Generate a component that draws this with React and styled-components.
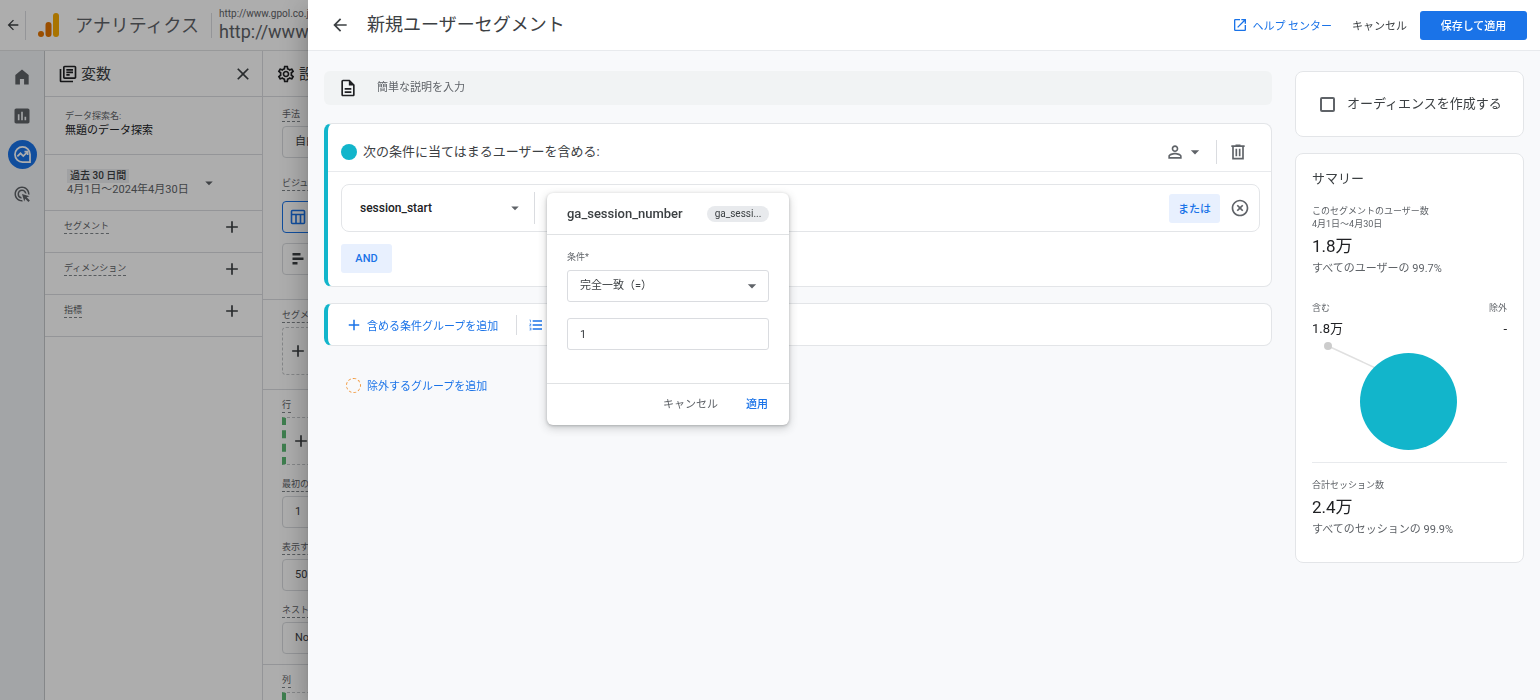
import styled, { createGlobalStyle, css } from "styled-components";
import {
  MdAdd,
  MdAdsClick,
  MdArrowBack,
  MdArrowDropDown,
  MdAssessment,
  MdClose,
  MdFormatListNumbered,
  MdHighlightOff,
  MdOpenInNew,
  MdOutlineDescription,
  MdOutlineLibraryBooks,
  MdOutlineSettings,
  MdPersonOutline,
} from "react-icons/md";

const variableRows = ["セグメント", "ディメンション", "指標"];

const AnalyticsLogo = () => (
  <svg width="22" height="24" viewBox="0 0 22 24" aria-hidden="true">
    <rect x="15" y="0" width="6" height="24" rx="3" fill="#f9ab00" />
    <rect x="7.500" y="9" width="6" height="15" rx="3" fill="#e37400" />
    <circle cx="3" cy="21" r="3" fill="#e37400" />
  </svg>
);

const HomeIcon = () => (
  <svg width="20" height="20" viewBox="0 0 24 24" fill="currentColor">
    <path d="M4 21V9.500L12 3l8 6.500V21h-5.500v-6.500h-5V21z" />
  </svg>
);

const ExploreIcon = () => (
  <svg
    width="19"
    height="19"
    viewBox="0 0 24 24"
    fill="none"
    stroke="currentColor"
    strokeWidth="2.200"
  >
    <path d="M12 2.500a9.500 9.500 0 1 0 0 19h9.500V12A9.500 9.500 0 0 0 12 2.500z" />
    <path d="M5.500 14.500l4-4 3.500 3.500 5-5" />
    <path d="M14.500 8.500h4v4" />
  </svg>
);

const TableIcon = () => (
  <svg
    width="16"
    height="16"
    viewBox="0 0 16 16"
    fill="none"
    stroke="currentColor"
    strokeWidth="1.600"
  >
    <rect x="1.500" y="1.500" width="13" height="13" rx="1" />
    <path d="M1.500 5.500h13M6 5.500v9M10.500 5.500v9" />
  </svg>
);

const BarsIcon = () => (
  <svg width="16" height="16" viewBox="0 0 16 16" fill="currentColor">
    <rect x="2.500" y="2" width="8" height="2.500" />
    <rect x="2.500" y="6.500" width="11" height="2.500" />
    <rect x="2.500" y="11" width="5" height="2.500" />
  </svg>
);

const TrashIcon = () => (
  <svg width="20" height="20" viewBox="0 0 24 24" fill="currentColor">
    <path
      fillRule="evenodd"
      d="M5 21V6H4V4h5V3h6v1h5v2h-1v15zM7 6v13h10V6zM9 8h2v9H9zM13 8h2v9h-2z"
    />
  </svg>
);

const SplitChart = () => (
  <svg width="195" height="123" viewBox="0 2 195 123" aria-hidden="true">
    <path d="M16 9L70 34" stroke="#e0e0e0" strokeWidth="1.500" />
    <circle cx="16" cy="9" r="4" fill="#ccc" />
    <circle cx="96.500" cy="64.500" r="48.500" fill="#12b5cb" />
  </svg>
);

const App = () => {
  return (
    <>
      <GlobalStyle />
      <Shell>
        <TopBar>
          <BackCell>
            <IconButton aria-label="戻る">
              <MdArrowBack size={16} />
            </IconButton>
          </BackCell>
          <AnalyticsLogo />
          <ProductName>アナリティクス</ProductName>
          <Account>
            <small>http://www.gpol.co.jp</small>
            <span>http://www.gpol.co.jp</span>
          </Account>
        </TopBar>
        <Workspace>
          <Rail>
            <RailButton aria-label="ホーム">
              <HomeIcon />
            </RailButton>
            <RailButton aria-label="レポート">
              <MdAssessment size={20} />
            </RailButton>
            <RailButton aria-label="探索" $active>
              <ExploreIcon />
            </RailButton>
            <RailButton aria-label="広告">
              <MdAdsClick size={18} />
            </RailButton>
          </Rail>

          <VariablePanel>
            <PanelTitle>
              <MdOutlineLibraryBooks size={20} />
              <h2>変数</h2>
              <IconButton aria-label="閉じる">
                <MdClose size={20} />
              </IconButton>
            </PanelTitle>
            <NameBlock>
              <small>データ探索名:</small>
              <p>無題のデータ探索</p>
            </NameBlock>
            <DateBlock>
              <div>
                <DateChip>過去 30 日間</DateChip>
                <p>4月1日～2024年4月30日</p>
              </div>
              <MdArrowDropDown size={18} />
            </DateBlock>
            {variableRows.map((name) => (
              <VariableRow key={name}>
                <DottedLabel>{name}</DottedLabel>
                <IconButton aria-label={`${name}を追加`}>
                  <MdAdd size={20} />
                </IconButton>
              </VariableRow>
            ))}
          </VariablePanel>

          <SettingsPanel>
            <PanelTitle>
              <MdOutlineSettings size={20} />
              <h2>設定</h2>
            </PanelTitle>
            <SettingsSection $top={8}>
              <Field>
                <DottedLabel>手法</DottedLabel>
                <FieldBox>自由形式</FieldBox>
              </Field>
              <Field $tiles>
                <DottedLabel>ビジュアリゼーション</DottedLabel>
                <Tile aria-label="テーブル" $active>
                  <TableIcon />
                </Tile>
                <Tile aria-label="棒グラフ">
                  <BarsIcon />
                </Tile>
              </Field>
            </SettingsSection>
            <SettingsSection $bottom={14}>
              <Field>
                <DottedLabel>セグメントの比較</DottedLabel>
                <DropZone>
                  <MdAdd size={20} />
                </DropZone>
              </Field>
            </SettingsSection>
            <SettingsSection>
              <Field>
                <DottedLabel>行</DottedLabel>
                <DropZone $marked>
                  <MdAdd size={20} />
                </DropZone>
              </Field>
              <Field>
                <DottedLabel>最初の行</DottedLabel>
                <FieldBox>1</FieldBox>
              </Field>
              <Field>
                <DottedLabel>表示する行数</DottedLabel>
                <FieldBox>50</FieldBox>
              </Field>
              <Field>
                <DottedLabel>ネストされた行</DottedLabel>
                <FieldBox>No</FieldBox>
              </Field>
            </SettingsSection>
            <SettingsSection>
              <Field>
                <DottedLabel>列</DottedLabel>
                <DropZone $marked>
                  <MdAdd size={20} />
                </DropZone>
              </Field>
            </SettingsSection>
          </SettingsPanel>
        </Workspace>
      </Shell>
      <Scrim />

      <Drawer>
        <DrawerHeader>
          <IconButton aria-label="戻る">
            <MdArrowBack size={20} />
          </IconButton>
          <h1>新規ユーザーセグメント</h1>
          <HelpLink href="#help">
            <MdOpenInNew size={16} />
            ヘルプ センター
          </HelpLink>
          <CancelButton>キャンセル</CancelButton>
          <SaveButton>保存して適用</SaveButton>
        </DrawerHeader>
        <DrawerBody>
          <Main>
            <Description>
              <MdOutlineDescription size={20} />
              <input aria-label="説明" placeholder="簡単な説明を入力" />
            </Description>

            <GroupCard>
              <GroupHeader>
                <Dot />
                <h2>次の条件に当てはまるユーザーを含める:</h2>
                <ScopeButton aria-label="スコープ">
                  <MdPersonOutline size={20} />
                  <MdArrowDropDown size={20} />
                </ScopeButton>
                <Divider $height={24} />
                <IconButton aria-label="削除" $muted>
                  <TrashIcon />
                </IconButton>
              </GroupHeader>
              <GroupBody>
                <ConditionRow>
                  <EventButton>
                    session_start
                    <MdArrowDropDown size={18} />
                  </EventButton>
                  <Divider $height={32} />
                  <RowActions>
                    <TonalButton>または</TonalButton>
                    <IconButton aria-label="条件を削除" $muted>
                      <MdHighlightOff size={20} />
                    </IconButton>
                  </RowActions>

                  <Popover>
                    <PopoverHeader>
                      <h3>ga_session_number</h3>
                      <span>ga_sessi...</span>
                    </PopoverHeader>
                    <PopoverBody>
                      <label htmlFor="operator">条件*</label>
                      <SelectBox>
                        <select id="operator" defaultValue="eq">
                          <option value="eq">完全一致（=）</option>
                        </select>
                        <MdArrowDropDown size={20} />
                      </SelectBox>
                      <ValueInput aria-label="値" defaultValue="1" />
                    </PopoverBody>
                    <PopoverFooter>
                      <TextButton>キャンセル</TextButton>
                      <TextButton $primary>適用</TextButton>
                    </PopoverFooter>
                  </Popover>
                </ConditionRow>
                <TonalButton $latin>AND</TonalButton>
              </GroupBody>
            </GroupCard>

            <AddCard>
              <AddButton>
                <MdAdd size={18} />
                含める条件グループを追加
              </AddButton>
              <Divider $height={20} />
              <AddButton aria-label="含める順序グループを追加">
                <MdFormatListNumbered size={16} />
              </AddButton>
            </AddCard>

            <ExcludeButton>
              <DashedRing />
              除外するグループを追加
            </ExcludeButton>
          </Main>

          <Side>
            <AudienceCard>
              <input type="checkbox" />
              オーディエンスを作成する
            </AudienceCard>
            <SummaryCard>
              <h2>サマリー</h2>
              <Caption>このセグメントのユーザー数</Caption>
              <Caption>4月1日～4月30日</Caption>
              <Figure>1.8万</Figure>
              <Note>すべてのユーザーの 99.7%</Note>
              <Split>
                <div>
                  <Caption>含む</Caption>
                  <SmallFigure>1.8万</SmallFigure>
                </div>
                <div>
                  <Caption>除外</Caption>
                  <SmallFigure>-</SmallFigure>
                </div>
              </Split>
              <SplitChart />
              <Totals>
                <Caption>合計セッション数</Caption>
                <Figure>2.4万</Figure>
                <Note>すべてのセッションの 99.9%</Note>
              </Totals>
            </SummaryCard>
          </Side>
        </DrawerBody>
      </Drawer>
    </>
  );
};

const GlobalStyle = createGlobalStyle`
  * {
    box-sizing: border-box;
  }

  body {
    margin: 0;
    overflow: hidden;
    color: #3c4043;
    background: #fff;
    font-family: Roboto, "Noto Sans CJK JP", sans-serif;
    font-size: 11px;
    line-height: 16px;
  }

  h1, h2, h3, p {
    margin: 0;
    font-weight: 400;
  }

  button, input, select {
    margin: 0;
    padding: 0;
    border: 0;
    background: none;
    color: inherit;
    font: inherit;
  }

  button {
    cursor: pointer;
  }

  svg {
    display: block;
    flex: none;
  }
`;

/* labels that are Japanese only sit better on the CJK font's own baseline */
const japaneseLabel = css`
  font-family: "Noto Sans CJK JP", sans-serif;
`;

const Shell = styled.div`
  display: flex;
  flex-direction: column;
  height: 100vh;
  overflow: hidden;
`;

const TopBar = styled.header`
  display: flex;
  flex: none;
  align-items: center;
  height: 51px;
  border-bottom: 1px solid #e0e2e4;
`;

const IconButton = styled.button`
  display: grid;
  place-items: center;
  color: ${({ $muted }) => ($muted ? "#5f6368" : "#3c4043")};
`;

const BackCell = styled.div`
  display: flex;
  align-items: center;
  height: 29px;
  padding: 0 4px 0 5px;
  margin-right: 12px;
  border-right: 1px solid #dadce0;
`;

const ProductName = styled.div`
  padding: 0 12px 0 15px;
  border-right: 1px solid #dadce0;
  color: #5f6368;
  font-size: 18px;
  line-height: 25px;
  white-space: nowrap;
`;

const Account = styled.div`
  display: flex;
  flex-direction: column;
  padding-left: 7px;
  color: #5f6368;

  small {
    font-size: 10px;
    line-height: 14px;
  }

  span {
    font-size: 18px;
    line-height: 22px;
  }
`;

const Workspace = styled.div`
  display: flex;
  flex: 1;
  min-height: 0;
`;

const Rail = styled.nav`
  display: flex;
  flex: none;
  flex-direction: column;
  align-items: center;
  gap: 10px;
  width: 45px;
  padding-top: 11px;
  border-right: 1px solid #c4c7ca;
  background: #f1f3f6;
`;

const RailButton = styled.button`
  display: grid;
  place-items: center;
  width: 29px;
  height: 29px;
  border-radius: 50%;
  color: ${({ $active }) => ($active ? "#fff" : "#5f6368")};
  background: ${({ $active }) => ($active ? "#1a73e8" : "transparent")};
`;

const VariablePanel = styled.section`
  flex: none;
  width: 218px;
  border-right: 1px solid #dadce0;
`;

const SettingsPanel = styled.section`
  flex: none;
  width: 218px;
  border-right: 1px solid #dadce0;
`;

const PanelTitle = styled.div`
  display: flex;
  align-items: center;
  gap: 3px;
  height: 46px;
  padding: 0 9px 0 13px;
  border-bottom: 1px solid #dadce0;
  color: #202124;

  h2 {
    flex: 1;
    color: #3c4043;
    font-size: 15px;
    line-height: 20px;
  }
`;

const NameBlock = styled.div`
  height: 58px;
  padding: 12px 20px;
  border-bottom: 1px solid #dadce0;

  small {
    display: block;
    color: #5f6368;
    font-size: 9px;
    line-height: 14px;
  }

  p {
    color: #202124;
  }
`;

const DateBlock = styled.div`
  display: flex;
  align-items: center;
  gap: 11px;
  height: 56px;
  padding: 0 22px;
  border-bottom: 1px solid #dadce0;
  color: #5f6368;

  p {
    line-height: 14px;
    white-space: nowrap;
  }
`;

const DateChip = styled.div`
  width: fit-content;
  padding: 0 3px;
  background: #eceef0;
  color: #3c4043;
  font-size: 10px;
  font-weight: 500;
  line-height: 14px;
`;

const VariableRow = styled.div`
  display: flex;
  align-items: flex-start;
  justify-content: space-between;
  height: 42px;
  padding: 6px 20px 0 19px;
  border-bottom: 1px solid #dadce0;

  svg {
    color: #3c4043;
  }
`;

const DottedLabel = styled.span`
  width: fit-content;
  margin-top: 2px;
  border-bottom: 1px dashed #80868b;
  color: #5f6368;
  font-size: 9px;
  line-height: 14px;
  white-space: nowrap;
`;

const SettingsSection = styled.div`
  display: flex;
  flex-direction: column;
  gap: 10px;
  padding: ${({ $top = 6 }) => $top}px 19px ${({ $bottom = 10 }) => $bottom}px;
  border-bottom: 1px solid #dadce0;
`;

const Field = styled.div`
  display: flex;
  flex-direction: column;
  gap: ${({ $tiles }) => ($tiles ? "10px" : "4px")};
  padding: ${({ $tiles }) => ($tiles ? "6px 0 14px" : "0")};
`;

const FieldBox = styled.div`
  height: 32px;
  padding: 0 12px;
  border: 1px solid #dadce0;
  border-radius: 4px;
  line-height: 30px;
`;

const Tile = styled.button`
  display: grid;
  place-items: center;
  width: 32px;
  height: 32px;
  border: 1px solid ${({ $active }) => ($active ? "#1a73e8" : "#dadce0")};
  border-radius: 4px;
  color: ${({ $active }) => ($active ? "#1a73e8" : "#3c4043")};
`;

const DropZone = styled.div`
  display: flex;
  align-items: center;
  height: 48px;
  padding-left: 5px;
  border: 1px dashed #c4c7ca;
  border-radius: 4px;

  ${({ $marked }) =>
    $marked &&
    css`
      border-left: 4px dashed #5bb974;
      border-radius: 0;
    `}
`;

const Scrim = styled.div`
  position: fixed;
  inset: 0;
  background: rgba(0, 0, 0, 0.32);
`;

const Drawer = styled.aside`
  position: fixed;
  inset: 0 0 0 308px;
  display: flex;
  flex-direction: column;
  background: #f8f9fb;
  box-shadow: 0 8px 10px -5px rgba(0, 0, 0, 0.2),
    0 16px 24px 2px rgba(0, 0, 0, 0.14), 0 6px 30px 5px rgba(0, 0, 0, 0.12);
`;

const DrawerHeader = styled.header`
  display: flex;
  flex: none;
  align-items: center;
  height: 51px;
  padding: 0 13px 0 22px;
  border-bottom: 1px solid #e8eaed;
  background: #fff;

  h1 {
    flex: 1;
    padding-left: 17px;
    font-size: 18px;
    line-height: 24px;
  }
`;

const HelpLink = styled.a`
  ${japaneseLabel}
  display: flex;
  align-items: center;
  gap: 5px;
  margin-right: 20px;
  color: #1a73e8;
  text-decoration: none;
`;

const TextButton = styled.button`
  color: ${({ $primary }) => ($primary ? "#1a73e8" : "#5f6368")};
  font-weight: ${({ $primary }) => ($primary ? 500 : 400)};
`;

const CancelButton = styled.button`
  ${japaneseLabel}
`;

const SaveButton = styled.button`
  ${japaneseLabel}
  width: 107px;
  height: 29px;
  margin-left: 13px;
  border-radius: 3px;
  background: #1a73e8;
  color: #fff;
  font-weight: 500;
`;

const DrawerBody = styled.div`
  display: flex;
  flex: 1;
  align-items: flex-start;
  gap: 23px;
  min-height: 0;
  padding: 20px 16px;
`;

const Main = styled.main`
  display: flex;
  flex: 1;
  flex-direction: column;
  min-width: 0;
`;

const Description = styled.div`
  display: flex;
  align-items: center;
  gap: 19px;
  height: 34px;
  padding: 0 14px;
  margin-bottom: 18px;
  border-radius: 6px;
  background: #f1f3f4;
  color: #202124;

  input {
    flex: 1;
    outline: 0;
  }

  input::placeholder {
    color: #5f6368;
    opacity: 1;
  }
`;

const cardFrame = css`
  border: 1px solid #e3e5e8;
  border-radius: 8px;
  background: #fff;
`;

const GroupCard = styled.section`
  ${cardFrame}
  border-left: 4px solid #12b5cb;
  margin-bottom: 16px;
`;

const GroupHeader = styled.div`
  display: flex;
  align-items: center;
  height: 48px;
  padding: 8px 23px 0 13px;
  border-bottom: 1px solid #e8eaed;

  h2 {
    flex: 1;
    padding-left: 6px;
    font-size: 13px;
    line-height: 20px;
  }
`;

const Dot = styled.span`
  width: 16px;
  height: 16px;
  border-radius: 50%;
  background: #12b5cb;
`;

const ScopeButton = styled.button`
  display: flex;
  align-items: center;
  margin-right: 11px;
  color: #5f6368;
`;

const Divider = styled.span`
  flex: none;
  width: 1px;
  height: ${({ $height }) => $height}px;
  margin-right: 11px;
  background: #dadce0;
`;

const GroupBody = styled.div`
  padding: 12px 11px 13px 13px;
`;

const ConditionRow = styled.div`
  ${cardFrame}
  position: relative;
  display: flex;
  align-items: center;
  height: 48px;
  margin-bottom: 12px;
`;

const EventButton = styled.button`
  display: flex;
  align-items: center;
  justify-content: space-between;
  width: 192px;
  padding: 0 10px 0 18px;
  color: #202124;
  font-size: 12px;
  font-weight: 500;

  svg {
    color: #5f6368;
  }
`;

const RowActions = styled.div`
  display: flex;
  align-items: center;
  gap: 10px;
  margin: 0 9px 0 auto;
`;

const TonalButton = styled.button`
  ${({ $latin }) => !$latin && japaneseLabel}
  min-width: 51px;
  height: 29px;
  border-radius: 3px;
  background: #e8f0fe;
  color: #1a73e8;
  font-weight: 500;
`;

const Popover = styled.div`
  position: absolute;
  top: 8px;
  left: 205px;
  z-index: 1;
  width: 242px;
  border-radius: 6px;
  background: #fff;
  box-shadow: 0 1px 3px rgba(60, 64, 67, 0.3),
    0 3px 8px 1px rgba(60, 64, 67, 0.2);
`;

const PopoverHeader = styled.div`
  display: flex;
  align-items: center;
  justify-content: space-between;
  height: 42px;
  padding: 0 20px;
  border-bottom: 1px solid #e0e2e4;

  h3 {
    font-size: 13px;
    font-weight: 500;
  }

  span {
    width: 62px;
    border-radius: 8px;
    background: #e8eaed;
    font-size: 10px;
    text-align: center;
  }
`;

const PopoverBody = styled.div`
  padding: 14px 20px 33px;

  label {
    display: block;
    margin-bottom: 5px;
    color: #5f6368;
    font-size: 9px;
  }
`;

const SelectBox = styled.div`
  display: grid;
  align-items: center;
  height: 32px;
  margin-bottom: 16px;
  border: 1px solid #dadce0;
  border-radius: 3px;

  select,
  svg {
    grid-area: 1 / 1;
  }

  select {
    height: 30px;
    padding: 0 12px;
    appearance: none;
  }

  svg {
    justify-self: end;
    margin-right: 6px;
    color: #5f6368;
    pointer-events: none;
  }
`;

const ValueInput = styled.input`
  width: 100%;
  height: 32px;
  padding: 0 12px;
  border: 1px solid #dadce0;
  border-radius: 3px;
`;

const PopoverFooter = styled.div`
  display: flex;
  align-items: center;
  justify-content: flex-end;
  gap: 28px;
  height: 42px;
  padding: 0 21px;
  border-top: 1px solid #e0e2e4;
`;

const AddCard = styled.section`
  ${cardFrame}
  display: flex;
  align-items: center;
  height: 43px;
  padding-left: 17px;
  border-left: 4px solid #12b5cb;
`;

const AddButton = styled.button`
  ${japaneseLabel}
  display: flex;
  align-items: center;
  gap: 4px;
  margin-right: 18px;
  color: #1a73e8;
`;

const ExcludeButton = styled.button`
  ${japaneseLabel}
  display: flex;
  align-items: center;
  align-self: flex-start;
  gap: 6px;
  margin: 31px 0 0 22px;
  color: #1a73e8;
`;

const DashedRing = styled.span`
  width: 15px;
  height: 15px;
  border: 1px dashed #f29a3f;
  border-radius: 50%;
`;

const Side = styled.div`
  display: flex;
  flex: none;
  flex-direction: column;
  gap: 16px;
  width: 229px;
`;

const AudienceCard = styled.label`
  ${cardFrame}
  display: flex;
  align-items: center;
  gap: 12px;
  height: 66px;
  padding-left: 24px;
  font-size: 13px;

  input {
    width: 15px;
    height: 15px;
    border: 2px solid #5f6368;
    border-radius: 2px;
    appearance: none;
  }
`;

const SummaryCard = styled.section`
  ${cardFrame}
  padding: 15px 16px 24px;

  h2 {
    margin-bottom: 16px;
    font-size: 13px;
    line-height: 20px;
  }
`;

const Caption = styled.p`
  color: #5f6368;
  font-size: 9px;
  line-height: 13px;
`;

const Figure = styled.p`
  color: #202124;
  font-size: 17px;
  line-height: 30px;
`;

const Note = styled.p`
  color: #5f6368;
`;

const SmallFigure = styled.p`
  color: #202124;
  font-size: 13px;
  line-height: 20px;
`;

const Split = styled.div`
  display: flex;
  justify-content: space-between;
  margin-top: 25px;

  > div {
    display: flex;
    flex-direction: column;
    gap: 4px;
  }

  > div:last-child {
    text-align: right;
  }
`;

const Totals = styled.div`
  padding-top: 16px;
  border-top: 1px solid #e8eaed;
`;

export default App;
